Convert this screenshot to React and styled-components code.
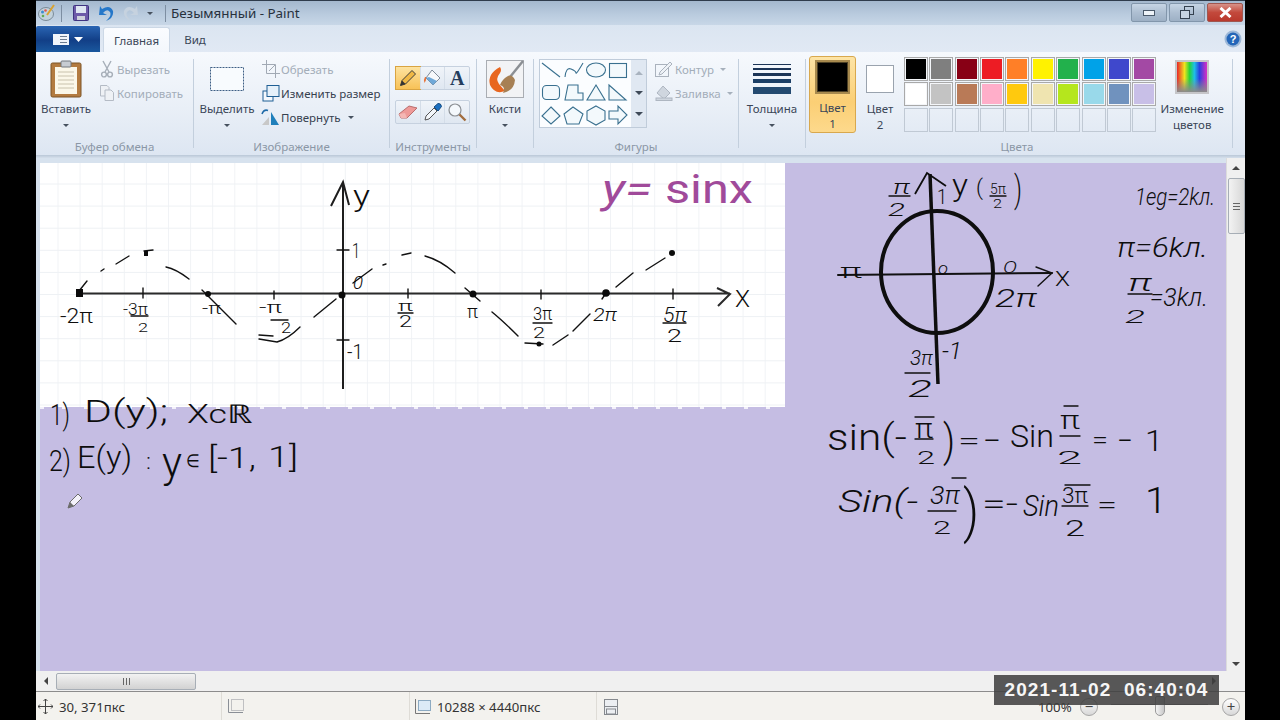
import React from 'react';
import styled, { createGlobalStyle } from 'styled-components';

const Global = createGlobalStyle`
  html, body { margin: 0; padding: 0; background: #000; overflow: hidden; }
  * { box-sizing: border-box; }
`;
const Screen = styled.div`
  position: relative; width: 1280px; height: 720px; background: #000; padding-left: 36px;
  font-family: "Noto Sans", "Open Sans", sans-serif; font-size: 11.5px; color: #3a4657;
`;
const Window = styled.div`width: 1209px; height: 720px; display: flex; flex-direction: column; overflow: hidden;`;
const TitleBar = styled.div`
  height: 25px; flex: none; display: flex; align-items: center; padding-left: 2px;
  border-top: 1px solid #2f3c4c; background: linear-gradient(#a4b8ce, #b9cbde 55%, #c8d7e7);
`;
const Quick = styled.div`display: flex; align-items: center; margin-left: ${p => p.$ml || 0}px;`;
const TitleSep = styled.div`width: 1px; height: 17px; background: #7d8ea2; margin-left: ${p => p.$ml}px;`;
const TitleText = styled.div`margin-left: 5px; font-size: 13.4px; color: #27313d; white-space: nowrap;`;
const WinButtons = styled.div`margin-left: auto; display: flex; gap: 2px; padding-right: 2px; align-self: flex-start; margin-top: 2px;`;
const WinButton = styled.div`
  width: 36px; height: 19px; display: flex; align-items: center; justify-content: center;
  border: 1px solid ${p => p.$close ? '#a0564f' : '#8296ab'}; border-radius: 2px;
  background: ${p => p.$close ? 'linear-gradient(#d79288, #c3493c 50%, #b9392d)' : 'linear-gradient(#c6d5e5, #aebfd2 50%, #9db0c5)'};
`;
const TabRow = styled.div`
  height: 27px; flex: none; display: flex; align-items: flex-end; background: linear-gradient(#dbe5f1, #e1e9f4);
`;
const FileButton = styled.div`
  width: 64px; height: 26px; display: flex; align-items: center; justify-content: center; gap: 5px;
  border-radius: 2px 2px 0 0; background: linear-gradient(#2a65b3, #123f87 55%, #1a589e);
`;
const ActiveTab = styled.div`
  width: 67px; height: 25px; margin-left: 3px; display: flex; align-items: center; justify-content: center;
  background: linear-gradient(#fafcff, #f3f7fc); border: 1px solid #ccd8e6; border-bottom: 0; border-radius: 3px 3px 0 0; color: #3a4657;
`;
const PlainTab = styled.div`width: 50px; height: 25px; display: flex; align-items: center; justify-content: center;`;
const HelpSlot = styled.div`margin-left: auto; align-self: center; padding-right: 3px; display: flex;`;
const Ribbon = styled.div`
  height: 103px; flex: none; display: flex; background: linear-gradient(#f6f9fd, #e9eff7 55%, #dde6f2);
`;
const RibbonEdge = styled.div`height: 3px; flex: none; background: linear-gradient(#b9c7d7, #d5dfeb);`;
const Group = styled.div`width: ${p => p.$w}px; flex: none; display: flex; flex-direction: column;`;
const GroupBody = styled.div`flex: 1; display: flex; align-items: flex-start; padding: 5px 0 0 ${p => p.$pl || 0}px; justify-content: ${p => p.$center ? 'center' : 'flex-start'};`;
const GroupLabel = styled.div`height: 18px; line-height: 20px; text-align: center; color: #8b97a6; white-space: nowrap; padding-right: ${p => p.$pr || 0}px;`;
const Sep = styled.div`width: 1px; flex: none; margin: 7px 0 7px; background: #c3cfdd;`;
const Big = styled.div`width: ${p => p.$w}px; flex: none; display: flex; flex-direction: column; align-items: center;`;
const IconSlot = styled.div`height: 44px; display: flex; align-items: center; justify-content: center;`;
const Line = styled.div`height: 16px; line-height: 16px; white-space: nowrap; display: flex; align-items: center; justify-content: center;`;
const Caret = styled.span`
  display: inline-block; width: 0; height: 0; border-left: 3px solid transparent; border-right: 3px solid transparent;
  border-top: 3px solid ${p => p.$dim ? '#a6b0bc' : '#46515f'}; margin-left: ${p => p.$ml || 0}px;
`;
const SmallCol = styled.div`display: flex; flex-direction: column; margin-left: ${p => p.$ml || 0}px;`;
const Small = styled.div`height: 24px; display: flex; align-items: center; white-space: nowrap; color: ${p => p.$dim ? '#a3adb9' : '#36414f'};`;
const SmallIcon = styled.div`width: ${p => p.$w || 21}px; flex: none; display: flex; justify-content: center;`;
const ToolStack = styled.div`display: flex; flex-direction: column; gap: 10px; margin-top: 9px;`;
const ToolRow = styled.div`display: flex; width: 75px; height: 24px; border: 1px solid #c6d1df; border-radius: 2px; background: linear-gradient(#f0f4f9, #dfe7f1);`;
const ToolCell = styled.div`
  flex: 1; display: flex; align-items: center; justify-content: center;
  ${p => p.$active && 'background: linear-gradient(#fde3a0, #f8c257); outline: 1px solid #d9a441;'}
  & + & { border-left: 1px solid #d4dde8; }
`;
const ToolGlyph = styled.span`font: 700 20px/1 "Liberation Serif", serif; color: #233c5c;`;
const Gallery = styled.div`width: 108px; height: 69px; margin-top: 2px; display: flex; border: 1px solid #c0ccda; flex: none;`;
const GalleryPane = styled.div`width: 91px; background: #fbfdff; display: flex;`;
const GallerySide = styled.div`flex: 1; display: flex; flex-direction: column; align-items: center; justify-content: space-around; background: #e0e8f2; padding: 3px 0;`;
const UpArrow = styled.span`width: 0; height: 0; border-left: 4px solid transparent; border-right: 4px solid transparent; border-bottom: 4px solid ${p => p.$c || '#a9b3bf'};`;
const DownArrow = styled.span`width: 0; height: 0; border-left: 4px solid transparent; border-right: 4px solid transparent; border-top: 4px solid ${p => p.$c || '#3f4a58'};`;
const ActiveColor = styled.div`
  width: 47px; height: 77px; margin: -1px 0 0 3px; flex: none; display: flex; flex-direction: column; align-items: center;
  border: 1px solid #d8a84e; border-radius: 3px; background: linear-gradient(#fde4a6, #fbcf75 60%, #fdd98c); padding-top: 3px;
`;
const SwatchBig = styled.div`width: 35px; height: 35px; margin-bottom: 6px; background: #000; border: 2px solid #a88a4e; box-shadow: inset 0 0 0 1px #4d4126;`;
const SecondColor = styled.div`width: 48px; flex: none; display: flex; flex-direction: column; align-items: center;`;
const SwatchSlot = styled.div`height: 44px; display: flex; align-items: center; justify-content: center;`;
const SwatchMid = styled.div`width: 28px; height: 28px; background: #fff; border: 1px solid #9aa3ae;`;
const Palette = styled.div`display: grid; grid-template-columns: repeat(10, 24px); grid-auto-rows: 24px; gap: 1.37px; flex: none;`;
const Cell = styled.div`
  background: ${p => p.$c || 'transparent'}; border: ${p => p.$c ? '2px solid #f4f6f9' : '1px solid #c0c9d4'};
  outline: ${p => p.$c ? '1px solid #a9a9a9' : 'none'}; outline-offset: -1px; padding: 0;
`;
const EditColors = styled.div`width: 66px; margin-left: 3px; flex: none; display: flex; flex-direction: column; align-items: center;`;
const Rainbow = styled.div`
  width: 34px; height: 34px; border: 2px solid #c5c5c8; margin-top: 3px; margin-bottom: 7px;
  background: linear-gradient(transparent 55%, #8a8a8a), linear-gradient(90deg, #e8262a, #f0e31e 25%, #25d33a 42%, #1ec0e6 58%, #2a3fe0 75%, #d92ec4);
`;
const Middle = styled.div`height: 513px; flex: none; display: flex;`;
const Workspace = styled.div`width: 1190px; padding: 5px 0 0 4px; background: #d7e2ee; display: flex;`;
const VScroll = styled.div`flex: 1; background: #f0f0f0; display: flex; flex-direction: column; align-items: center; padding-top: 8px; border-left: 1px solid #dcdcdc;`;
const VThumb = styled.div`
  width: 17px; height: 56px; margin-top: 8px; border: 1px solid #a7aeb6; border-radius: 2px;
  background: linear-gradient(90deg, #f3f3f3, #d7d7d7); display: flex; align-items: center; justify-content: center;
`;
const Grip = styled.div`width: 7px; height: 7px; background: repeating-linear-gradient(#666 0 1px, transparent 1px 3px);`;
const VSpacer = styled.div`flex: 1;`;
const VDown = styled.div`height: 14px; display: flex; align-items: center;`;
const HScroll = styled.div`height: 20px; flex: none; display: flex; align-items: center; background: #f0f0f0;`;
const HLeft = styled.div`width: 20px; display: flex; justify-content: center;`;
const HThumb = styled.div`
  width: 140px; height: 17px; border: 1px solid #a7aeb6; border-radius: 2px;
  background: linear-gradient(#f2f2f2, #d2d2d2); display: flex; align-items: center; justify-content: center;
`;
const HGrip = styled.div`width: 7px; height: 7px; background: repeating-linear-gradient(90deg, #666 0 1px, transparent 1px 3px);`;
const HRight = styled.div`margin-left: auto; padding-right: 29px; display: flex;`;
const LeftArrow = styled.span`width: 0; height: 0; border-top: 4px solid transparent; border-bottom: 4px solid transparent; border-right: 4px solid #444;`;
const RightArrow = styled.span`width: 0; height: 0; border-top: 4px solid transparent; border-bottom: 4px solid transparent; border-left: 4px solid #444;`;
const StatusBar = styled.div`height: 30px; flex: none; display: flex; align-items: center; background: #f3f2ee; border-top: 1px solid #8c8c8c; font-size: 13.2px; color: #333;`;
const StatusCell = styled.div`
  width: ${p => p.$w ? p.$w + 'px' : 'auto'}; height: 100%; flex: none; display: flex; align-items: center; gap: 6px; padding-left: ${p => p.$pl}px;
  border-right: ${p => p.$w ? '1px solid #dedcd6' : '0'};
`;
const Zoomer = styled.div`flex: 1; height: 100%; display: flex; align-items: center; padding-left: 420px;`;
const ZoomPct = styled.div`width: 42px;`;
const ZoomBtn = styled.div`
  width: 18px; height: 18px; flex: none; border-radius: 50%; border: 1px solid #a5a5a5; background: linear-gradient(#fff, #d8d8d8);
  display: flex; align-items: center; justify-content: center; margin-left: ${p => p.$ml || 0}px; color: #444; font-size: 15px; line-height: 1;
`;
const Track = styled.div`position: relative; width: 97px; height: 1px; flex: none; background: #8f8f8f; margin-left: 13px; margin-top: -4px;`;
const Knob = styled.div`
  position: absolute; left: 44px; top: -8px; width: 10px; height: 20px; background: linear-gradient(90deg, #f4f4f4, #c9c9c9);
  border: 1px solid #999; border-radius: 2px 2px 5px 5px;
`;
const Stamp = styled.div`
  position: absolute; left: 994px; top: 675px; width: 225px; height: 30px; background: rgba(62,62,62,.86);
  color: #f6f6f6; font: 700 19px "Liberation Sans", sans-serif; letter-spacing: 1.05px; display: flex; align-items: center; justify-content: center;
  white-space: pre;
`;
const Sheet = styled.svg`display: block; flex: none;`;
const Hand = styled.text`
  font-family: Roboto, "Liberation Sans", sans-serif; font-weight: ${p => p.$w || 300};
  font-style: ${p => p.$i ? 'italic' : 'normal'}; fill: ${p => p.$c || '#0d0d0d'};
`;

const palette = ['#000000','#7f7f7f','#880015','#ed1c24','#ff7f27','#fff200','#22b14c','#00a2e8','#3f48cc','#a349a4',
  '#ffffff','#c3c3c3','#b97a57','#ffaec9','#ffc90e','#efe4b0','#b5e61d','#99d9ea','#7092be','#c8bfe7',
  null,null,null,null,null,null,null,null,null,null];

const S = 'M79 290L87 280|M101 270L104 268|M116 263L129 255|M144 250L153 249|M166 266Q176 268 189 278|M202 289L236 323|M259 334L273 335|M259 338L277 341Q288 338 300 326|M314 316L336 298|M353 282L372 268|M383 264L386 263|M402 254L411 252|M425 255Q440 259 455 272|M465 287L480 300|M492 311Q503 320 518 335|M525 342L543 343|M553 344L568 334|M573 330L590 313|M602 298L606 292|M616 286L633 272|M646 269L665 257|M143 287V297|M274 290V298|M408 288V297|M541 289V298|M673 288V298|M337 249H349|M337 339H349|M131 315H148|M271 319H288|M398 312H413|M533 322H552|M663 322H686'.split('|');
const R = 'M1036 266L1052 272L1038 285|M1128 293H1152|M905 372H930|M889 195H910|M990 195H1006'.split('|');
const E = 'M915 438H933|M1060 435H1080|M928 510H956|M1062 505H1088|M915 416H934|M1064 405H1078|M952 477H966|M1065 484H1090'.split('|');

const labels = [
  ['y',353,205,30,17],['1',352,257,20,8],['-1',347,358,20,16],['0',353,288,18,10,1],['-2π',60,322,21,33],
  ['-3π',123,314,16,25],['2',138,331,13,10],['-π',202,313,17,19],['-π',259,312,16,23],['2',281,332,14,10],
  ['π',398,310,15,15],['2',399,326,16,13],['π',467,317,18,11],['3π',533,319,18,19],['2',533,337,14,12],
  ['2π',593,320,18,24,1],['5π',663,321,20,24,1],['2',667,341,18,15],['X',735,306,24,15],
  ['π',893,193,20,17,1],['2',888,215,18,17,1],['1',937,203,20,10],['y',952,195,32,16],['(',976,194,22,7],
  ['5π',990,193,14,16],['2',993,207,12,9],[')',1014,201,36,8],['π',840,277,20,22],['o',938,273,16,10,1],
  ['O',1003,272,16,14,1],['2π',995,306,25,42,1],['X',1055,285,20,15],['3π',910,364,20,23,1],['2',908,396,24,24,1],
  ['-1',942,358,24,20,1],['1eg=2kл.',1135,204,24,80,1],['π=6kл.',1117,256,27,91,1],['π',1128,290,24,24,1],['2',1125,322,19,20,1],['=3kл.',1150,305,26,58,1],
  ['sin(-',827,449,36,80],['π',915,437,28,18],['2',917,463,18,18],[')',943,455,44,12],['=',958,449,26,22],['-',984,449,30,16],
  ['Sin',1010,446,32,44],['π',1060,428,26,20],['2',1057,463,18,25],['=',1092,448,26,16],['-',1118,449,30,14],['1',1145,450,30,18],
  ['Sin(-',838,511,32,80,1],['3π',930,503,26,30,1],['2',933,533,18,18],[')',963,530,58,16],['=-',982,513,30,36],
  ['Sin',1023,515,30,36,1],['3π',1062,502,22,26],['2',1065,535,22,20],['=',1097,513,26,20],['1',1145,512,36,22],
  ['1)',50,424,30,20],['D(y);',84,421,32,84,0],['Xcℝ',187,422,26,66],
  ['2)',49,470,30,22],['E(y)',77,467,32,55],[':',146,468,22,5],['y',162,476,42,20],['∈',186,466,18,14],['[-1,',208,467,30,48],['1]',268,466,30,30],
];

function Paste() {
  return <svg width="32" height="38" viewBox="0 0 32 38"><rect x="1" y="3" width="30" height="34" rx="1.5" fill="#b37b40" stroke="#7c5527"/><rect x="5" y="7" width="22" height="27" fill="#fbf7e9"/><path d="M8 12H24M8 16H24M8 20H24M8 24H24M8 28H24" stroke="#c9c2ad"/><rect x="11" y="1" width="10" height="6" rx="1" fill="#c7ccd2" stroke="#72787f"/></svg>;
}
function Scissors() {
  return <svg width="14" height="18" viewBox="0 0 14 18" fill="none" stroke="#a6aeb8" strokeWidth="1.4"><path d="M3 1L9 12M11 1L5 12"/><circle cx="4" cy="14.5" r="2.4"/><circle cx="10" cy="14.5" r="2.4"/></svg>;
}
function CopyIc() {
  return <svg width="16" height="18" viewBox="0 0 16 18" fill="#eef1f5" stroke="#b4bbc5"><path d="M1.5 1.5H8L10 3.5V12H1.5Z"/><path d="M6 6H12L14.5 8.5V16.5H6Z"/></svg>;
}
function Crop() {
  return <svg width="18" height="18" viewBox="0 0 18 18" fill="none" stroke="#a1a9b4"><path d="M4.5 0V13.5H18M0 4.5H13.5V18"/><path d="M7 11L13 5" /></svg>;
}
function Resize() {
  return <svg width="18" height="18" viewBox="0 0 18 18"><rect x="1" y="7" width="10" height="10" fill="#f5f9fd" stroke="#1f5f94"/><rect x="5" y="1.5" width="12" height="11" fill="#e6f1fa" stroke="#1f5f94"/></svg>;
}
function Rotate() {
  return <svg width="20" height="18" viewBox="0 0 20 18"><path d="M1 17L8 9V17Z" fill="#c8c8c8"/><path d="M10 4V17H18Z" fill="#1f7fbb"/><path d="M1 6Q3 1 7 2.5" fill="none" stroke="#1f6aa8" strokeWidth="1.6"/></svg>;
}
function Pencil() {
  return <svg width="18" height="18" viewBox="0 0 18 18"><path d="M1.5 16.5L3 11.5L13 1.5L16.5 5L6.5 15Z" fill="#f0b845" stroke="#3c3c3c"/><path d="M1.5 16.5L3 11.5L6.5 15Z" fill="#333"/></svg>;
}
function Fill() {
  return <svg width="20" height="20" viewBox="0 0 20 20"><path d="M9 2L17 10L10 17L3 10Z" fill="#f6f8fb" stroke="#7f8b99"/><path d="M3 10L10 17L14 13L6 9Z" fill="#6fa8d8"/><path d="M2 9Q0 12 1.500 15Q4 12 3 9Z" fill="#e8743b"/></svg>;
}
function Eraser() {
  return <svg width="20" height="16" viewBox="0 0 20 16"><path d="M1 10L11 2L19 4L9 14L3 14Z" fill="#ee9a98" stroke="#b96d6d"/><path d="M1 10L3 14L9 14L7 9Z" fill="#f4b7b4"/></svg>;
}
function Picker() {
  return <svg width="20" height="20" viewBox="0 0 20 20"><path d="M2 18L3 14L11 6L14 9L6 17Z" fill="#f3f6fa" stroke="#555"/><path d="M11 5L15 1.500Q18 1 18.500 4.500L15 9Z" fill="#1c70c0" stroke="#154b82"/></svg>;
}
function Magnifier() {
  return <svg width="20" height="20" viewBox="0 0 20 20"><circle cx="8" cy="8" r="6" fill="#f4f8fc" stroke="#8b8f94" strokeWidth="1.2"/><path d="M12.500 12.500L18.500 18.500" stroke="#a26d3d" strokeWidth="2.400"/></svg>;
}
function Brush() {
  return <svg width="38" height="38" viewBox="0 0 38 38"><rect x=".5" y=".5" width="37" height="37" fill="#f2f3f5" stroke="#a9adb3"/><path d="M37 1L24 17" stroke="#8b8f94" strokeWidth="2.500"/><path d="M14 7Q1 14 4 25Q9 35 19 31L13 24Q9 19 14 13Q16 10 14 7Z" fill="#e8661f"/><path d="M17 20Q25 11 29 20Q28 31 17 33Q20 27 14 25Q15 22 17 20Z" fill="#a78054"/></svg>;
}
function Shapes() {
  return (
    <svg width="91" height="67" viewBox="540 60 91 67" fill="#f3f9fc" stroke="#39708f" strokeWidth="1.100">
      <path d="M542 63L560 77" fill="none"/><path d="M565 77Q566 67 571 69T576 73T583 63" fill="none"/>
      <ellipse cx="596" cy="70" rx="9.500" ry="7"/><rect x="609.500" y="63.500" width="17" height="14"/>
      <rect x="542.500" y="85.500" width="17" height="14" rx="4"/><path d="M568 85H578V93H583V100H565Z"/>
      <path d="M596 85L605 100H587Z"/><path d="M609 85L626 100H609Z"/>
      <path d="M551 107L560 116L551 124L542 116Z"/><path d="M573 107L583 114L579 124H567L564 114Z"/>
      <path d="M596 106L605 111V120L596 125L587 120V111Z"/><path d="M609 111H618V106L627 115L618 124V119H609Z"/>
    </svg>
  );
}
function Outline() {
  return <svg width="18" height="16" viewBox="0 0 18 16" fill="none" stroke="#aab2bd"><rect x=".5" y="3.500" width="13" height="12" /><path d="M5 11L15 1L17 3L7 13L4 14Z" fill="#eef2f7"/></svg>;
}
function FillDim() {
  return <svg width="18" height="16" viewBox="0 0 18 16" fill="#cfd6df" stroke="#aeb6c1"><path d="M8 1L15 8L9 14L2 8Z"/><rect x="1" y="13" width="16" height="2.500"/></svg>;
}
function SizeLines() {
  return <svg width="38" height="30" viewBox="0 0 38 30" fill="#1c3557"><rect y="0" width="38" height="1"/><rect y="4" width="38" height="2"/><rect y="9" width="38" height="3"/><rect y="15" width="38" height="4" fill="#1c3f66"/><rect y="23" width="38" height="7" fill="#244a70"/></svg>;
}
function Save() {
  return <svg width="16" height="16" viewBox="0 0 16 16"><rect x=".5" y=".5" width="15" height="15" rx="1" fill="#6d5aa8" stroke="#3f3380"/><rect x="3" y="1" width="10" height="7" fill="#dfe6f2"/><rect x="4" y="11" width="8" height="4" fill="#cfd2dc"/></svg>;
}
function Undo({ dim }) {
  const c = dim ? '#c6d2df' : '#2577c9';
  return <svg width="16" height="17" viewBox="0 0 16 17" style={dim ? { transform: 'scaleX(-1)' } : undefined}><path d="M5 8Q9 3 12 7Q14 11 8 16Q16 13 15 6Q12 -1 4 4L2 1L1 10L9 10Z" fill={c}/></svg>;
}
function AppIcon() {
  return <svg width="18" height="18" viewBox="0 0 18 18"><ellipse cx="8" cy="10" rx="7.500" ry="6.500" fill="#c3d2dc" stroke="#7a8a97"/><circle cx="4.500" cy="8" r="1.500" fill="#3c8dd0"/><circle cx="7.500" cy="6.500" r="1.300" fill="#e0574f"/><circle cx="5" cy="12" r="1.300" fill="#60ad55"/><path d="M16 1L9 11" stroke="#d9a22f" strokeWidth="2"/></svg>;
}
function MoveIc() {
  return <svg width="15" height="15" viewBox="0 0 15 15" fill="none" stroke="#444"><path d="M7.500 0V15M0 7.500H15M5.500 2L7.500 0L9.500 2M5.500 13L7.500 15L9.500 13M2 5.500L0 7.500L2 9.500M13 5.500L15 7.500L13 9.500"/></svg>;
}
function SelIc() {
  return <svg width="16" height="15" viewBox="0 0 16 15" fill="none" stroke="#8a8f96"><path d="M.5 0V13.500H15" /><rect x="3.500" y=".5" width="12" height="11" strokeDasharray="1 1"/></svg>;
}
function CanvasIc() {
  return <svg width="16" height="15" viewBox="0 0 16 15"><path d="M.5 0V14.500H15" fill="none" stroke="#777"/><rect x="3.500" y="1.500" width="12" height="10" fill="#dceaf6" stroke="#8caac2"/></svg>;
}
function DiskIc() {
  return <svg width="14" height="16" viewBox="0 0 14 16" fill="#eceff2" stroke="#85898e"><rect x=".5" y=".5" width="13" height="15"/><rect x="2.500" y="10" width="9" height="5"/><path d="M.5 7.500H13.500"/></svg>;
}

function Drawing() {
  const v = []; for (let x = 58; x < 785; x += 22.1) v.push(x);
  const h = []; for (let y = 183; y < 405; y += 22.1) h.push(y);
  return (
    <Sheet width="1186" height="508" viewBox="40 162 1186 508">
      <rect x="40" y="162" width="1186" height="508" fill="#c5bde3"/>
      <rect x="40" y="162" width="745" height="244" fill="#fff"/>
      {v.map(x => <path key={x} d={`M${x} 162V406`} stroke="#f1f3f6"/>)}
      {h.map(y => <path key={y} d={`M40 ${y}H785`} stroke="#eef1f4"/>)}
      <path d="M40 407H785" stroke="#f3f1fa" strokeWidth="2" strokeDasharray="4 18"/>
      <path d="M79 292.500H730M717 287L730 293L718 305" fill="none" stroke="#2a2a2a" strokeWidth="2"/>
      <path d="M343 181V388M331 205L343 181L349 204" fill="none" stroke="#1d1d1d" strokeWidth="2"/>
      <g fill="none" stroke="#111" strokeWidth="1.400" strokeLinecap="round">
        {S.map(d => <path key={d} d={d}/>)}
        <path d="M838 274L1052 272" strokeWidth="2"/>
        {R.map(d => <path key={d} d={d}/>)}
        {E.map(d => <path key={d} d={d}/>)}
      </g>
      <g fill="#0b0b0b">
        <rect x="76" y="288" width="7" height="8"/><rect x="144" y="250" width="4" height="5"/>
        <circle cx="208" cy="293" r="3"/><circle cx="342" cy="294" r="3.500"/><circle cx="473" cy="293" r="3.500"/>
        <circle cx="539" cy="343" r="2.500"/><circle cx="606" cy="292" r="3.800"/><circle cx="672" cy="252" r="3"/>
      </g>
      <ellipse cx="937" cy="271" rx="56" ry="61" fill="none" stroke="#0e0e0e" strokeWidth="4"/>
      <path d="M930 173L938 383" stroke="#0e0e0e" strokeWidth="3.500"/>
      <path d="M915 193L927 172L946 185" fill="none" stroke="#0e0e0e" strokeWidth="1.800"/>
      {labels.map(([t, x, y, s, w, i], n) => (
        <Hand key={n} x={x} y={y} fontSize={s} textLength={w} lengthAdjust="spacingAndGlyphs" $i={i}>{t}</Hand>
      ))}
      <Hand x="602" y="202" fontSize="40" textLength="50" lengthAdjust="spacingAndGlyphs" $c="#a04a9a" $w="400" $i>y=</Hand>
      <Hand x="665" y="202" fontSize="40" textLength="88" lengthAdjust="spacingAndGlyphs" $c="#a04a9a" $w="400">sinx</Hand>
      <g transform="translate(68 492)"><path d="M0 15L2 9L10 1L14 5L6 13Z" fill="#f4f2fa" stroke="#6c6c6c"/><path d="M0 15L2 9L6 13Z" fill="#6c6c6c"/></g>
    </Sheet>
  );
}

export default function App() {
  return (
    <Screen>
      <Global />
      <Window>
        <TitleBar>
          <Quick><AppIcon /></Quick>
          <TitleSep $ml={5} />
          <Quick $ml={11}><Save /></Quick>
          <Quick $ml={9}><Undo /></Quick>
          <Quick $ml={9}><Undo dim /></Quick>
          <Quick $ml={8}><Caret /></Quick>
          <TitleSep $ml={12} />
          <TitleText>Безымянный - Paint</TitleText>
          <WinButtons>
            <WinButton><svg width="12" height="6"><rect x=".5" y=".5" width="11" height="5" fill="#eef3f8" stroke="#4b5a6b"/></svg></WinButton>
            <WinButton><svg width="14" height="13" fill="none" stroke="#34414f"><rect x="4.500" y=".5" width="9" height="8"/><rect x=".5" y="4.500" width="9" height="8" fill="#c7d4e2"/></svg></WinButton>
            <WinButton $close><svg width="13" height="11" stroke="#fff" strokeWidth="3"><path d="M1.500 1L11.500 10M11.500 1L1.500 10"/></svg></WinButton>
          </WinButtons>
        </TitleBar>
        <TabRow>
          <FileButton>
            <svg width="16" height="11"><rect width="16" height="11" fill="#f2f5fa"/><path d="M7 2.500H14M7 5.500H14M7 8.500H14" stroke="#6d7c90"/></svg>
            <svg width="9" height="5"><path d="M0 0H9L4.500 5Z" fill="#fff"/></svg>
          </FileButton>
          <ActiveTab>Главная</ActiveTab>
          <PlainTab>Вид</PlainTab>
          <HelpSlot>
            <svg width="18" height="18" viewBox="0 0 18 18"><circle cx="9" cy="9" r="8.500" fill="#9db8d8"/><circle cx="9" cy="9" r="6.500" fill="#2466b8"/><text x="9" y="13" textAnchor="middle" fontSize="11" fontWeight="700" fill="#fff" fontFamily="Liberation Sans">?</text></svg>
          </HelpSlot>
        </TabRow>
        <Ribbon>
          <Group $w={157}>
            <GroupBody $pl={6}>
              <Big $w={48}><IconSlot><Paste /></IconSlot><Line>Вставить</Line><Line><Caret /></Line></Big>
              <SmallCol $ml={6}>
                <Small $dim><SmallIcon><Scissors /></SmallIcon>Вырезать</Small>
                <Small $dim><SmallIcon><CopyIc /></SmallIcon>Копировать</Small>
              </SmallCol>
            </GroupBody>
            <GroupLabel>Буфер обмена</GroupLabel>
          </Group>
          <Sep />
          <Group $w={195}>
            <GroupBody>
              <Big $w={66}>
                <IconSlot><svg width="34" height="24"><rect x=".5" y=".5" width="33" height="23" fill="#f8fbfe" stroke="#3e5e85" strokeDasharray="2 1"/></svg></IconSlot>
                <Line>Выделить</Line><Line><Caret /></Line>
              </Big>
              <SmallCol>
                <Small $dim><SmallIcon><Crop /></SmallIcon>Обрезать</Small>
                <Small><SmallIcon><Resize /></SmallIcon>Изменить размер</Small>
                <Small><SmallIcon><Rotate /></SmallIcon>Повернуть<Caret $ml={7} /></Small>
              </SmallCol>
            </GroupBody>
            <GroupLabel>Изображение</GroupLabel>
          </Group>
          <Sep />
          <Group $w={86}>
            <GroupBody $pl={5}>
              <ToolStack>
                <ToolRow>
                  <ToolCell $active><Pencil /></ToolCell>
                  <ToolCell><Fill /></ToolCell>
                  <ToolCell><ToolGlyph>A</ToolGlyph></ToolCell>
                </ToolRow>
                <ToolRow>
                  <ToolCell><Eraser /></ToolCell>
                  <ToolCell><Picker /></ToolCell>
                  <ToolCell><Magnifier /></ToolCell>
                </ToolRow>
              </ToolStack>
            </GroupBody>
            <GroupLabel>Инструменты</GroupLabel>
          </Group>
          <Sep />
          <Group $w={56}>
            <GroupBody $center>
              <Big $w={48}><IconSlot><Brush /></IconSlot><Line>Кисти</Line><Line><Caret /></Line></Big>
            </GroupBody>
            <GroupLabel />
          </Group>
          <Sep />
          <Group $w={204}>
            <GroupBody $pl={5}>
              <Gallery>
                <GalleryPane><Shapes /></GalleryPane>
                <GallerySide><UpArrow /><DownArrow /><DownArrow /></GallerySide>
              </Gallery>
              <SmallCol $ml={6}>
                <Small $dim><SmallIcon $w={22}><Outline /></SmallIcon>Контур<Caret $dim $ml={6} /></Small>
                <Small $dim><SmallIcon $w={22}><FillDim /></SmallIcon>Заливка<Caret $dim $ml={6} /></Small>
              </SmallCol>
            </GroupBody>
            <GroupLabel>Фигуры</GroupLabel>
          </Group>
          <Sep />
          <Group $w={66}>
            <GroupBody $center>
              <Big $w={60}><IconSlot><SizeLines /></IconSlot><Line>Толщина</Line><Line><Caret /></Line></Big>
            </GroupBody>
            <GroupLabel />
          </Group>
          <Sep />
          <Group $w={426}>
            <GroupBody>
              <ActiveColor><SwatchBig /><Line>Цвет</Line><Line>1</Line></ActiveColor>
              <SecondColor><SwatchSlot><SwatchMid /></SwatchSlot><Line>Цвет</Line><Line>2</Line></SecondColor>
              <Palette>{palette.map((c, i) => <Cell key={i} $c={c} />)}</Palette>
              <EditColors><Rainbow /><Line>Изменение</Line><Line>цветов</Line></EditColors>
            </GroupBody>
            <GroupLabel $pr={4}>Цвета</GroupLabel>
          </Group>
          <Sep />
        </Ribbon>
        <RibbonEdge />
        <Middle>
          <Workspace><Drawing /></Workspace>
          <VScroll>
            <UpArrow $c="#444" />
            <VThumb><Grip /></VThumb>
            <VSpacer />
            <VDown><DownArrow $c="#444" /></VDown>
          </VScroll>
        </Middle>
        <HScroll>
          <HLeft><LeftArrow /></HLeft>
          <HThumb><HGrip /></HThumb>
          <HRight><RightArrow /></HRight>
        </HScroll>
        <StatusBar>
          <StatusCell $w={186} $pl={2}><MoveIc /><span>30, 371пкс</span></StatusCell>
          <StatusCell $w={188} $pl={6}><SelIc /></StatusCell>
          <StatusCell $w={187} $pl={5}><CanvasIc /><span>10288 × 4440пкс</span></StatusCell>
          <StatusCell $pl={7}><DiskIc /></StatusCell>
          <Zoomer>
            <ZoomPct>100%</ZoomPct>
            <ZoomBtn>−</ZoomBtn>
            <Track><Knob /></Track>
            <ZoomBtn $ml={14}>+</ZoomBtn>
          </Zoomer>
        </StatusBar>
      </Window>
      <Stamp>2021-11-02  06:40:04</Stamp>
    </Screen>
  );
}
